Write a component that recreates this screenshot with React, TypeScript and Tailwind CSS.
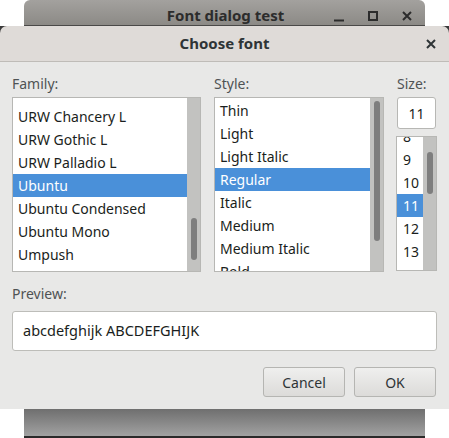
import React from 'react';

const families = ['URW Chancery L', 'URW Gothic L', 'URW Palladio L', 'Ubuntu', 'Ubuntu Condensed', 'Ubuntu Mono', 'Umpush', 'utkal'];
const styles = ['Thin', 'Light', 'Light Italic', 'Regular', 'Italic', 'Medium', 'Medium Italic', 'Bold'];
const sizes = ['8', '9', '10', '11', '12', '13', '14'];

function Scrollbar({ thumbTop, thumbHeight }: { thumbTop: number; thumbHeight: number }) {
  return (
    <div className="w-[13px] shrink-0 bg-[#c2c2c0] flex flex-col items-center">
      <div style={{ height: thumbTop }} />
      <div className="w-[6px] rounded-full bg-[#7e7e7e]" style={{ height: thumbHeight }} />
    </div>
  );
}

function ListBox({
  items,
  selected,
  offset,
  thumbTop,
  thumbHeight,
  className,
  textPad,
}: {
  items: string[];
  selected: string;
  offset: string;
  thumbTop: number;
  thumbHeight: number;
  className: string;
  textPad: string;
}) {
  return (
    <div className={`flex border border-[#b7b7b4] bg-white overflow-hidden ${className}`}>
      <div className="flex-1 overflow-hidden">
        <div className={offset}>
          {items.map((it) => (
            <div
              key={it}
              className={`h-[23px] flex items-center whitespace-nowrap ${textPad} ${
                it === selected ? 'bg-[#4a90d9] text-white' : 'text-[#1a1e20]'
              }`}
            >
              {it}
            </div>
          ))}
        </div>
      </div>
      <Scrollbar thumbTop={thumbTop} thumbHeight={thumbHeight} />
    </div>
  );
}

export default function App() {
  return (
    <div
      className="w-[449px] h-[438px] bg-white flex flex-col overflow-hidden text-[14px]"
      style={{ fontFamily: '"Noto Sans", "Open Sans", sans-serif' }}
    >
      {/* Parent window title bar */}
      <div className="mx-[24px] h-[26px] shrink-0 rounded-t-[6px] bg-gradient-to-b from-[#a3a19e] to-[#8c8a86] border-b border-[#4a4948] flex items-end relative">
        <div className="flex-1 text-center font-bold text-[15px] text-[#2c2c2c] leading-[18px] pb-[1px] pl-[2px]">
          Font dialog test
        </div>
        <div className="absolute right-[12px] bottom-[3px] flex items-center gap-[22px] text-[#2c2c2c]">
          <svg width="12" height="12" viewBox="0 0 12 12">
            <path d="M1 10.5h10" stroke="#2c2c2c" strokeWidth="2" />
          </svg>
          <svg width="12" height="12" viewBox="0 0 12 12">
            <rect x="2" y="2" width="8" height="8" fill="none" stroke="#2c2c2c" strokeWidth="2" />
          </svg>
          <svg width="12" height="12" viewBox="0 0 12 12">
            <path d="M2 2l8 8M10 2l-8 8" stroke="#2c2c2c" strokeWidth="2" />
          </svg>
        </div>
      </div>

      {/* Dialog */}
      <div className="h-[383px] shrink-0 bg-[#3a3a3a] flex flex-col">
        <div className="h-[36px] shrink-0 rounded-t-[7px] bg-[#dfdbd8] border-b border-[#bfbcb8] flex items-center relative">
          <div className="flex-1 text-center font-bold text-[15px] text-[#2e3436]">Choose font</div>
          <svg className="absolute right-[13px] top-[13px]" width="10" height="10" viewBox="0 0 10 10">
            <path d="M1 1l8 8M9 1l-8 8" stroke="#2e3436" strokeWidth="2" />
          </svg>
        </div>

        <div className="flex-1 bg-[#e8e8e7] px-[12px] pt-[13px] flex flex-col">
          <div className="flex">
            <div className="w-[189px] flex flex-col">
              <div className="h-[18px] leading-[18px] text-[#4f5354] mb-[4px]">Family:</div>
              <ListBox
                items={families}
                selected="Ubuntu"
                offset="pt-[7px]"
                thumbTop={120}
                thumbHeight={42}
                className="h-[175px]"
                textPad="pl-[5px]"
              />
            </div>
            <div className="w-[170px] ml-[13px] flex flex-col">
              <div className="h-[18px] leading-[18px] text-[#4f5354] mb-[4px]">Style:</div>
              <ListBox
                items={styles}
                selected="Regular"
                offset="pt-[1px]"
                thumbTop={3}
                thumbHeight={140}
                className="h-[175px]"
                textPad="pl-[5px]"
              />
            </div>
            <div className="w-[41px] ml-[12px] flex flex-col">
              <div className="h-[18px] leading-[18px] text-[#4f5354] mb-[4px] pl-[1px]">Size:</div>
              <div className="ml-[1px] w-[39px] h-[32px] rounded-[3px] border border-[#b7b7b4] bg-white flex items-center justify-center text-[#1a1e20]">
                11
              </div>
              <ListBox
                items={sizes}
                selected="11"
                offset="-mt-[12px]"
                thumbTop={15}
                thumbHeight={42}
                className="h-[135px] mt-[7px]"
                textPad="pl-[6px]"
              />
            </div>
          </div>

          <div className="mt-[13px] h-[18px] leading-[18px] text-[#4f5354]">Preview:</div>
          <div className="mt-[8px] h-[40px] rounded-[3px] border border-[#bdbdb9] bg-white flex items-center px-[10px] text-[14.5px] text-[#1a1e20]">
            abcdefghijk ABCDEFGHIJK
          </div>

          <div className="mt-[16px] flex justify-end gap-[9px] pr-[1px]">
            <button className="w-[82px] h-[30px] rounded-[3px] border border-[#b5b5b2] bg-gradient-to-b from-[#efefee] to-[#dcdbd9] text-[#2e3436]">
              Cancel
            </button>
            <button className="w-[82px] h-[30px] rounded-[3px] border border-[#b5b5b2] bg-gradient-to-b from-[#efefee] to-[#dcdbd9] text-[#2e3436]">
              OK
            </button>
          </div>
        </div>
      </div>

      {/* Parent window bottom */}
      <div className="mx-[24px] flex-1 bg-gradient-to-b from-[#6f6f6f] to-[#a2a2a2] border-b-[2px] border-[#2a2a2a]" />
    </div>
  );
}
